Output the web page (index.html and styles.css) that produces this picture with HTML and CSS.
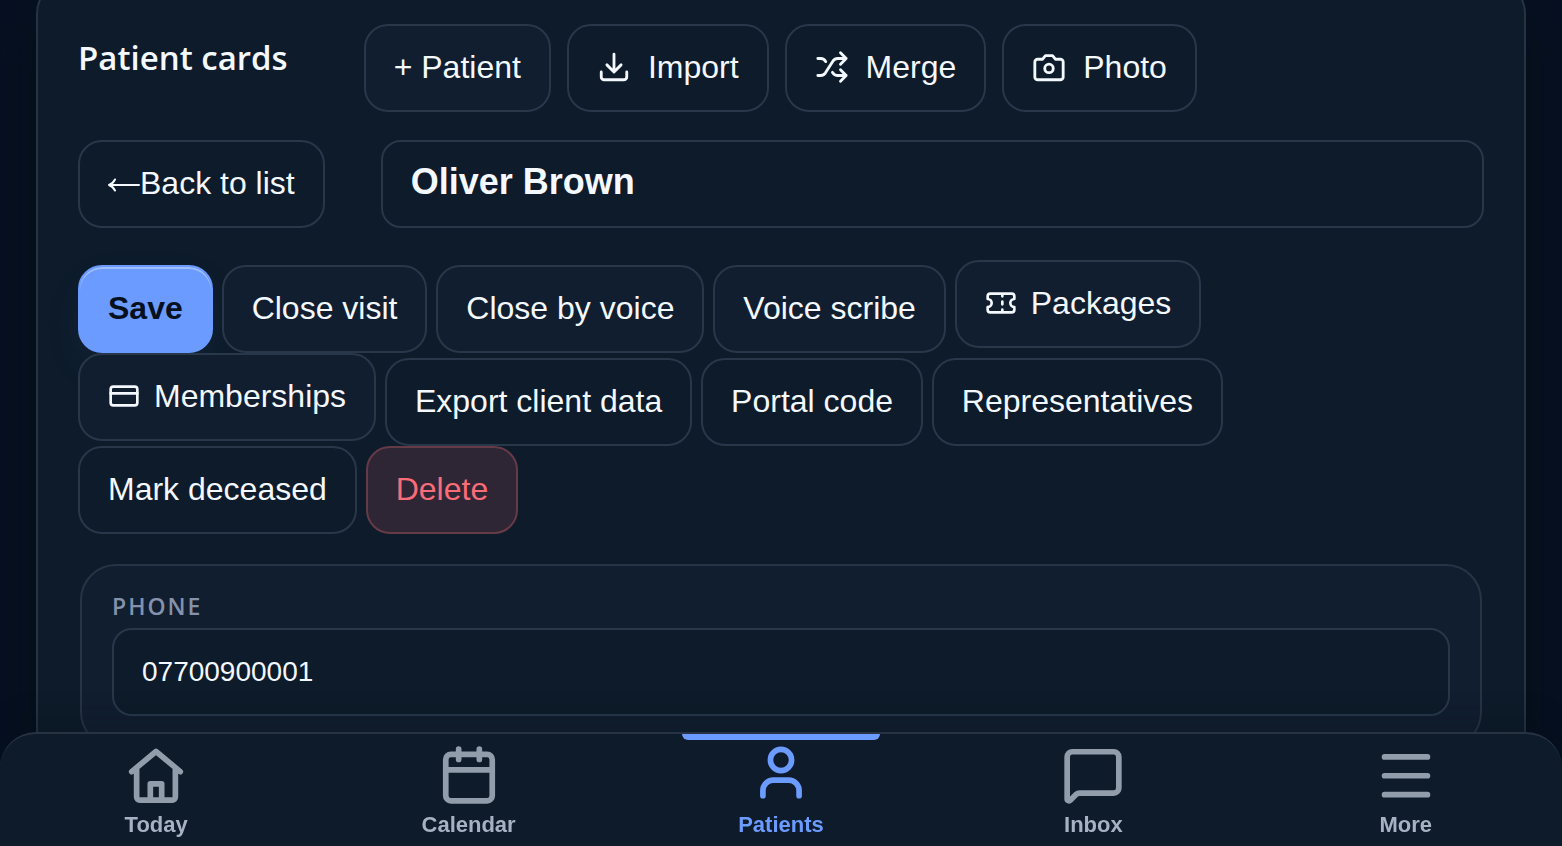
FILE: index.html
```html
<!DOCTYPE html>
<html lang="en">
<head>
    <meta charset="UTF-8">
    <meta name="viewport" content="width=device-width, initial-scale=1.0">
    <title>Patient cards</title>
    <link rel="stylesheet" href="styles.css">
</head>
<body>

    <main class="page">
        <section class="panel">
            <!-- Title and main tools -->
            <header class="panel-head">
                <h2>Patient cards</h2>
                <div class="tools">
                    <button type="button" class="btn soft">+ Patient</button>
                    <button type="button" class="btn with-icon">
                        <svg class="icon" viewBox="0 0 24 24"><path d="M12 3v12M7 10.500l5 5 5-5M3 15.500V19a2 2 0 0 0 2 2h14a2 2 0 0 0 2-2v-3.500"/></svg>
                        Import
                    </button>
                    <button type="button" class="btn with-icon">
                        <svg class="icon" viewBox="0 0 24 24"><path d="m18 14 4 4-4 4M18 2l4 4-4 4M2 18h1.973a4 4 0 0 0 3.300-1.700l5.454-8.600a4 4 0 0 1 3.300-1.700H22M2 6h1.972a4 4 0 0 1 3.600 2.200M22 18h-6.041a4 4 0 0 1-3.300-1.800l-.359-.45"/></svg>
                        Merge
                    </button>
                    <button type="button" class="btn with-icon">
                        <svg class="icon" viewBox="0 0 24 24"><path d="M14.500 4h-5L7.500 6.500H4a2 2 0 0 0-2 2V19a2 2 0 0 0 2 2h16a2 2 0 0 0 2-2V8.500a2 2 0 0 0-2-2h-3.500z"/><circle cx="12" cy="13" r="3"/></svg>
                        Photo
                    </button>
                </div>
            </header>

            <div class="patient-row">
                <button type="button" class="btn back">
                    <svg class="arrow" viewBox="0 0 32 32"><path d="M1 18h30M7 12.500Q5 16.500 1 18q4 1.500 6 5.500"/></svg>Back to list
                </button>
                <input class="patient-name" type="text" value="Oliver Brown" aria-label="Patient name">
            </div>

            <!-- Card actions -->
            <div class="actions">
                <button type="button" class="btn primary">Save</button>
                <button type="button" class="btn soft">Close visit</button>
                <button type="button" class="btn soft">Close by voice</button>
                <button type="button" class="btn soft">Voice scribe</button>
                <button type="button" class="btn soft with-icon">
                    <svg class="icon" viewBox="0 0 24 24"><path d="M2 9a3 3 0 0 1 0 6v2a2 2 0 0 0 2 2h16a2 2 0 0 0 2-2v-2a3 3 0 0 1 0-6V7a2 2 0 0 0-2-2H4a2 2 0 0 0-2 2ZM13 5v2M13 11v2M13 17v2"/></svg>
                    Packages
                </button>
                <button type="button" class="btn soft with-icon">
                    <svg class="icon" viewBox="0 0 24 24"><rect x="2" y="5" width="20" height="14" rx="2"/><path d="M2 10h20"/></svg>
                    Memberships
                </button>
                <button type="button" class="btn">Export client data</button>
                <button type="button" class="btn">Portal code</button>
                <button type="button" class="btn">Representatives</button>
                <button type="button" class="btn">Mark deceased</button>
                <button type="button" class="btn danger">Delete</button>
            </div>

            <div class="field-card">
                <label for="phone">PHONE</label>
                <input id="phone" type="tel" value="07700900001">
            </div>
        </section>
    </main>

    <!-- Bottom navigation -->
    <nav class="bottom-nav">
        <a href="#today">
            <svg viewBox="0 0 24 24"><path d="M2.600 10.700 12 2.900l9.400 7.800M4.500 9.500v11a1.200 1.200 0 0 0 1.200 1.200h12.600a1.200 1.200 0 0 0 1.200-1.200v-11M9.800 21.500v-6.100h4.400v6.100"/></svg>
            <span>Today</span>
        </a>
        <a href="#calendar">
            <svg viewBox="0 0 24 24"><path d="M8 2v4M16 2v4M3 10h18"/><rect x="3" y="4" width="18" height="18" rx="2"/></svg>
            <span>Calendar</span>
        </a>
        <a href="#patients" class="active" aria-current="page">
            <svg viewBox="0 0 24 24"><circle cx="12" cy="6.200" r="4.100"/><path d="M19 20v-2a4 4 0 0 0-4-4H9a4 4 0 0 0-4 4v2"/></svg>
            <span>Patients</span>
        </a>
        <a href="#inbox">
            <svg viewBox="0 0 24 24"><path d="M22 17a2 2 0 0 1-2 2H6.828a2 2 0 0 0-1.414.586l-2.202 2.202A.71.71 0 0 1 2 21.286V5a2 2 0 0 1 2-2h16a2 2 0 0 1 2 2z"/></svg>
            <span>Inbox</span>
        </a>
        <a href="#more">
            <svg viewBox="0 0 24 24"><path d="M3.700 5h16.600M3.700 12.300h16.600M3.700 19.600h16.600"/></svg>
            <span>More</span>
        </a>
    </nav>

</body>
</html>
```
FILE: styles.css
```css
* {
    box-sizing: border-box;
}

body {
    margin: 0;
    background: #061022;
    color: #f4f8ff;
    font-family: "Liberation Sans", Arial, sans-serif;
    font-size: 32px;
}

.page {
    padding: 0 36px 56px;
}

/* Main panel */
.panel {
    margin-top: -22px;
    padding: 44px 40px 40px;
    background: #0d1b2a;
    border: 2px solid #273342;
    border-radius: 36px;
    box-shadow: 0 24px 48px rgba(5, 16, 20, 0.8);
}

.panel-head {
    display: flex;
    align-items: flex-start;
    gap: 76px;
    margin-bottom: 28px;
}

h2 {
    margin: 0;
    font-family: "Open Sans", "Noto Sans", sans-serif;
    font-size: 33px;
    font-weight: 600;
    line-height: 68px;
    white-space: nowrap;
}

.tools {
    display: flex;
    flex-wrap: wrap;
    gap: 16px;
}

/* Buttons */
.btn {
    height: 88px;
    padding: 0 28px 2px;
    background: transparent;
    border: 2px solid #29374b;
    border-radius: 24px;
    color: inherit;
    font: inherit;
    line-height: 36px;
    white-space: nowrap;
    cursor: pointer;
}

.btn.soft {
    background: #111e2f;
}

.btn.primary {
    background: #6c9bff;
    border-color: #6c9bff;
    box-shadow: inset 0 2px 0 rgba(255, 255, 255, 0.35), 0 16px 40px rgba(108, 155, 255, 0.06);
    color: #06101f;
    font-weight: bold;
}

.btn.danger {
    background: #2f2635;
    border-color: #653b47;
    color: #f96c78;
}

.with-icon {
    display: inline-flex;
    align-items: center;
    gap: 14px;
}

.icon {
    display: block;
    width: 32px;
    height: 32px;
}

.tools .with-icon {
    gap: 17px;
}

.tools .icon {
    width: 34px;
    height: 34px;
}

.back {
    display: flex;
    align-items: center;
}

.arrow {
    width: 32px;
    height: 32px;
}

svg {
    fill: none;
    stroke: currentColor;
    stroke-width: 2;
    stroke-linecap: round;
    stroke-linejoin: round;
}

/* Patient name */
.patient-row {
    display: flex;
    gap: 56px;
    margin-bottom: 32px;
}

input {
    min-width: 0;
    height: 88px;
    padding: 0 28px;
    background: #0d1b2a;
    border: 2px solid #29374b;
    border-radius: 20px;
    color: inherit;
    font: inherit;
}

.patient-name {
    flex: 1;
    padding-bottom: 4px;
    font-size: 36px;
    font-weight: bold;
}

.actions {
    line-height: 32px;
    margin-bottom: 30px;
}

/* Contact fields */
.field-card {
    margin: 0 2px;
    padding: 24px 30px 30px;
    background: #111e2f;
    border: 2px solid #273445;
    border-radius: 36px;
}

.field-card label {
    display: block;
    margin-bottom: 6px;
    color: #8492ab;
    font-family: "Open Sans", "Noto Sans", sans-serif;
    font-size: 23px;
    font-weight: 600;
    letter-spacing: 2px;
    line-height: 32px;
}

.field-card input {
    display: block;
    width: 100%;
    font-size: 28px;
}

/* Bottom navigation */
.bottom-nav {
    position: fixed;
    left: 0;
    right: 0;
    bottom: 0;
    display: grid;
    grid-template-columns: repeat(5, 1fr);
    background: #0d1b2a;
    border-top: 2px solid #273342;
    border-radius: 36px 36px 0 0;
    box-shadow: 0 -8px 32px rgba(6, 16, 28, 0.3);
}

.bottom-nav a {
    position: relative;
    display: flex;
    flex-direction: column;
    align-items: center;
    gap: 6px;
    padding: 10px 0 8px;
    color: #a6b1c3;
    font-size: 22px;
    font-weight: bold;
    line-height: 26px;
    text-decoration: none;
}

.bottom-nav svg {
    width: 62px;
    height: 62px;
    color: #929dac;
    stroke-width: 2.2;
}

.bottom-nav .active,
.bottom-nav .active svg {
    color: #6c9bff;
}

.bottom-nav .active::before {
    content: "";
    position: absolute;
    top: 0;
    left: 50%;
    width: 198px;
    height: 6px;
    margin-left: -99px;
    background: #6c9bff;
    border-radius: 0 0 6px 6px;
}
```
